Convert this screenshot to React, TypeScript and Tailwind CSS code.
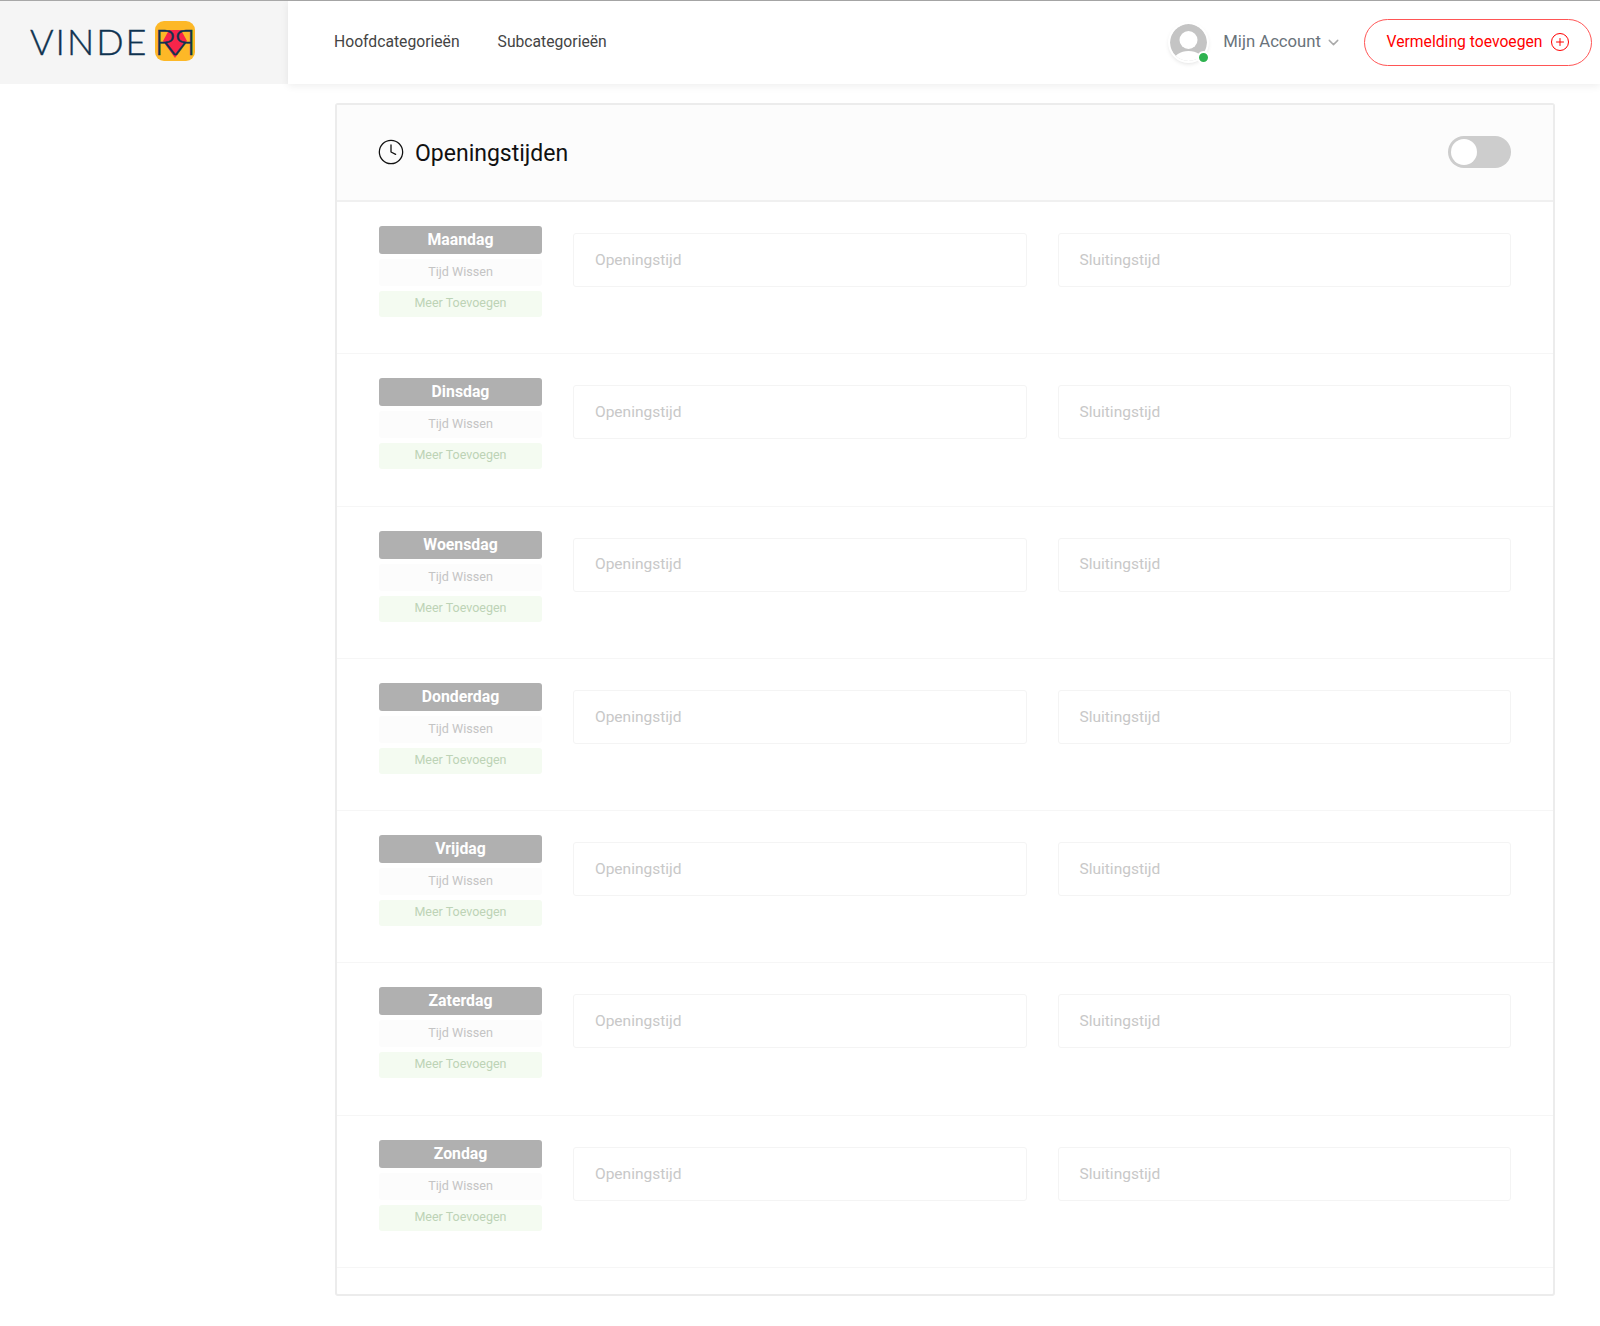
import { ChevronDown, Clock, Plus } from "lucide-react";

const days = ["Maandag", "Dinsdag", "Woensdag", "Donderdag", "Vrijdag", "Zaterdag", "Zondag"];

function Logo() {
  return (
    <div className="relative flex items-center h-[40px] text-[36px] leading-none font-light text-[#0f3350] [-webkit-text-stroke:0.4px_#0f3350] font-['Lato',sans-serif]">
      <span className="tracking-[2px]">VINDE</span>
      <span className="relative ml-[6px] flex">
        <span className="absolute left-[1px] top-[-2px] w-[40px] h-[40px] rounded-[9px] bg-[#fdb827]" />
        <svg className="absolute left-[1px] top-[-2px]" width="40" height="40" viewBox="0 0 40 40">
          <path d="M20 37 L8 20 L14 9 H26 L32 20 Z" fill="#f8254a" />
        </svg>
        <span className="relative">R</span>
        <span className="relative -ml-[2px] -scale-x-100">R</span>
      </span>
    </div>
  );
}

function Header() {
  return (
    <header className="flex h-[84px] border-t border-[#a8a8a8] bg-white">
      <div className="flex w-[288px] items-center bg-[#f5f5f5] pb-[3px] pl-[30px]">
        <Logo />
      </div>
      <div className="flex flex-1 shadow-[0_2px_8px_rgba(0,0,0,0.07)]">
        <nav className="flex flex-1 items-center gap-[38px] pb-[1px] pl-[46px] text-[15.7px] text-[#444]">
          <a>Hoofdcategorieën</a>
          <a>Subcategorieën</a>
        </nav>
        <div className="flex items-center pb-[1px] pr-[8px]">
          <div className="relative mr-[16px] h-[37px] w-[37px] rounded-full shadow-[0_0_0_2px_#fff,0_2px_5px_rgba(0,0,0,0.18)]">
            <svg className="rounded-full" width="37" height="37" viewBox="0 0 37 37">
              <circle cx="18.5" cy="18.5" r="18.5" fill="#c4c4c4" />
              <circle cx="18.5" cy="16" r="9" fill="#fff" />
              <ellipse cx="18.5" cy="37" rx="15" ry="10" fill="#fff" />
            </svg>
            <span className="absolute bottom-[-3px] right-[-3px] h-[13px] w-[13px] rounded-full border-2 border-white bg-[#2eb24f]" />
          </div>
          <span className="text-[16.7px] text-[#6a737b]">Mijn Account</span>
          <ChevronDown className="ml-[4px] h-[17px] w-[17px] text-[#aaa]" />
          <button className="ml-[22px] flex h-[47px] w-[228px] items-center justify-center gap-[9px] rounded-full border border-[#f55] text-[15.7px] text-[#f00]">
            Vermelding toevoegen
            <span className="flex h-[18px] w-[18px] items-center justify-center rounded-full border-[1.5px] border-[#f00]">
              <Plus className="h-[12px] w-[12px]" strokeWidth={2} />
            </span>
          </button>
        </div>
      </div>
    </header>
  );
}

function DayRow({ day }: { day: string }) {
  return (
    <div className="flex h-[152.3px] gap-[31px] border-b border-[#f6f6f6] px-[42px] pt-[24px]">
      <div className="flex w-[163px] shrink-0 flex-col text-center">
        <div className="h-[28px] rounded-[3px] bg-[#b0b0b0] text-[15.8px] font-bold leading-[28px] text-white">{day}</div>
        <div className="mt-[5px] h-[27px] rounded-[3px] bg-[#fcfcfc] text-[12.6px] leading-[26px] text-[#c4c4c4]">Tijd Wissen</div>
        <div className="mt-[5px] h-[26px] rounded-[3px] bg-[#f4fbf1] text-[12.5px] leading-[24px] text-[#bdd3b6]">Meer Toevoegen</div>
      </div>
      <div className="mt-[7px] flex h-[54px] flex-1 items-center rounded-[3px] border border-[#f4f4f4] pl-[21px] pt-[1px] text-[15.5px] text-[#c8c8c8]">Openingstijd</div>
      <div className="mt-[7px] flex h-[54px] flex-1 items-center rounded-[3px] border border-[#f4f4f4] pl-[21px] pt-[1px] text-[15.5px] text-[#c8c8c8]">Sluitingstijd</div>
    </div>
  );
}

export default function App() {
  return (
    <div className="min-h-[1326px] bg-white font-['Roboto',sans-serif]">
      <Header />
      <main className="ml-[335px] mt-[19px] h-[1193px] w-[1220px] rounded-[3px] border-2 border-[#ececec]">
        <div className="flex h-[97px] items-center justify-between border-b-2 border-[#f0f0f0] bg-[#fcfcfc] px-[42px]">
          <div className="flex items-center gap-[10px] text-[#111]">
            <Clock className="-ml-[2px] mb-[2px] h-[28px] w-[28px]" strokeWidth={1.1} />
            <h2 className="mt-[4px] text-[23px] font-normal">Openingstijden</h2>
          </div>
          <div className="mb-[2px] flex h-[32px] w-[63px] items-center rounded-full bg-[#cdcdcd] pl-[3px]">
            <span className="h-[26px] w-[26px] rounded-full bg-white" />
          </div>
        </div>
        {days.map((day) => (
          <DayRow key={day} day={day} />
        ))}
      </main>
    </div>
  );
}
